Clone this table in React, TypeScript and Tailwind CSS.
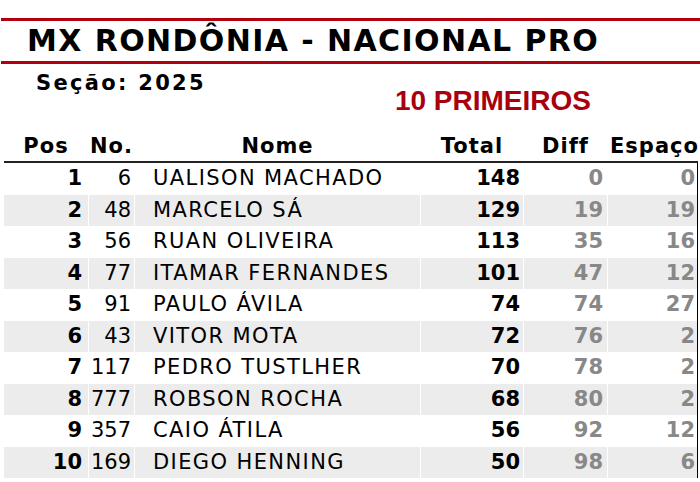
import React from "react";

const rows = [
  { pos: 1, no: "6", nome: "UALISON MACHADO", total: 148, diff: 0, esp: 0 },
  { pos: 2, no: "48", nome: "MARCELO SÁ", total: 129, diff: 19, esp: 19 },
  { pos: 3, no: "56", nome: "RUAN OLIVEIRA", total: 113, diff: 35, esp: 16 },
  { pos: 4, no: "77", nome: "ITAMAR FERNANDES", total: 101, diff: 47, esp: 12 },
  { pos: 5, no: "91", nome: "PAULO ÁVILA", total: 74, diff: 74, esp: 27 },
  { pos: 6, no: "43", nome: "VITOR MOTA", total: 72, diff: 76, esp: 2 },
  { pos: 7, no: "117", nome: "PEDRO TUSTLHER", total: 70, diff: 78, esp: 2 },
  { pos: 8, no: "777", nome: "ROBSON ROCHA", total: 68, diff: 80, esp: 2 },
  { pos: 9, no: "357", nome: "CAIO ÁTILA", total: 56, diff: 92, esp: 12 },
  { pos: 10, no: "169", nome: "DIEGO HENNING", total: 50, diff: 98, esp: 6 },
];

const cols = "grid grid-cols-[84px_45px_285px_102px_83px_89px] gap-x-[1px]";

export default function App() {
  return (
    <div className="w-[700px] h-[482px] bg-white overflow-hidden font-['DejaVu_Sans',sans-serif] text-black">
      <div className="pt-[18px]">
        <div className="h-[3px] bg-[#b3000f] ml-[1px]" />
        <div className="h-[40px] flex items-center pl-[27px] text-[30px] font-bold leading-none tracking-[1.4px]">
          MX RONDÔNIA - NACIONAL PRO
        </div>
        <div className="h-[3px] bg-[#b3000f] ml-[1px]" />
      </div>
      <div className="h-[67px] flex items-start">
        <div className="mt-[7px] ml-[36px] text-[21px] leading-[24px] font-bold tracking-[2.3px]">
          Seção: 2025
        </div>
        <div className="mt-[22px] ml-[189px] text-[28px] leading-[30px] font-bold text-[#a8000c] font-['Liberation_Sans',sans-serif]">
          10 PRIMEIROS
        </div>
      </div>
      <div className="pl-[4px]">
        <div className={`${cols} h-[30px] items-center text-[21px] font-bold text-center tracking-[1px]`}>
          <div>Pos</div>
          <div>No.</div>
          <div>Nome</div>
          <div>Total</div>
          <div>Diff</div>
          <div className="whitespace-nowrap pl-[2px]">Espaço</div>
        </div>
        <div className="w-[694px] h-[2px] bg-[#222]" />
        <div className="w-[694px] border-r border-black">
          {rows.map((r, i) => {
            const bg = i % 2 === 1 ? "bg-[#ececec]" : "bg-white";
            return (
              <div key={r.pos} className={`${cols} h-[31.5px] text-[21px]`}>
                <div className={`${bg} flex items-center justify-end pr-[6px] font-bold`}>{r.pos}</div>
                <div className={`${bg} flex items-center justify-end pr-[3px]`}>{r.no}</div>
                <div className={`${bg} flex items-center pl-[18px] tracking-[1.4px] whitespace-nowrap`}>{r.nome}</div>
                <div className={`${bg} flex items-center justify-end pr-[3px] font-bold`}>{r.total}</div>
                <div className={`${bg} flex items-center justify-end pr-[4px] font-bold text-[#888]`}>{r.diff}</div>
                <div className={`${bg} flex items-center justify-end pr-[2px] font-bold text-[#888]`}>{r.esp}</div>
              </div>
            );
          })}
        </div>
      </div>
    </div>
  );
}
